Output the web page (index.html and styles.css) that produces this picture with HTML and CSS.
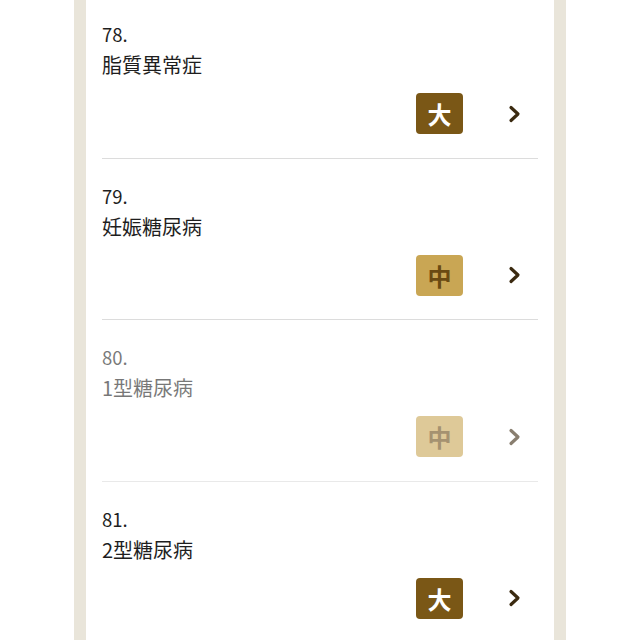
FILE: index.html
```html
<!DOCTYPE html>
<html>
<head>
<meta name="viewport" content="width=device-width, initial-scale=1">
<link rel="stylesheet" href="styles.css">
</head>
<body>

<div class="page">
    <ul class="disease-list">
        <li class="disease">
            <div class="num">78.</div>
            <div class="name">脂質異常症</div>
            <div class="disease-foot">
                <span class="level level-high">大</span>
                <span class="arrow"><svg width="14" height="18" viewBox="0 0 14 18"><path d="M3 2.5 L10 9 L3 15.5" fill="none" stroke="#3b2a10" stroke-width="3.2" stroke-linecap="round" stroke-linejoin="round"/></svg></span>
            </div>
        </li>
        <li class="disease">
            <div class="num">79.</div>
            <div class="name">妊娠糖尿病</div>
            <div class="disease-foot">
                <span class="level level-mid">中</span>
                <span class="arrow"><svg width="14" height="18" viewBox="0 0 14 18"><path d="M3 2.5 L10 9 L3 15.5" fill="none" stroke="#3b2a10" stroke-width="3.2" stroke-linecap="round" stroke-linejoin="round"/></svg></span>
            </div>
        </li>
        <li class="disease disabled">
            <div class="num">80.</div>
            <div class="name">1型糖尿病</div>
            <div class="disease-foot">
                <span class="level level-mid">中</span>
                <span class="arrow"><svg width="14" height="18" viewBox="0 0 14 18"><path d="M3 2.5 L10 9 L3 15.5" fill="none" stroke="#3b2a10" stroke-width="3.2" stroke-linecap="round" stroke-linejoin="round"/></svg></span>
            </div>
        </li>
        <li class="disease">
            <div class="num">81.</div>
            <div class="name">2型糖尿病</div>
            <div class="disease-foot">
                <span class="level level-high">大</span>
                <span class="arrow"><svg width="14" height="18" viewBox="0 0 14 18"><path d="M3 2.5 L10 9 L3 15.5" fill="none" stroke="#3b2a10" stroke-width="3.2" stroke-linecap="round" stroke-linejoin="round"/></svg></span>
            </div>
        </li>
    </ul>
</div>

</body>
</html>
```

FILE: styles.css
```css
* {
    box-sizing: border-box;
    margin: 0;
    padding: 0;
}

body {
    font-family: "Noto Sans CJK JP", "Noto Sans", sans-serif;
    background: #fff;
    color: #1e1e1e;
    height: 640px;
    overflow: hidden;
}

.page {
    width: 492px;
    margin: -3px 0 0 74px;
    border-left: 12px solid #e9e5da;
    border-right: 12px solid #e9e5da;
    background: #fff;
    padding: 0 16px;
    min-height: 700px;
}

.disease-list {
    list-style: none;
}

.disease {
    padding: 23px 0 23.5px;
    border-bottom: 1px solid #dcdcdc;
}

.num {
    font-size: 18.5px;
    line-height: 28px;
}

.name {
    font-size: 20px;
    line-height: 34px;
}

.disease-foot {
    display: flex;
    justify-content: flex-end;
    align-items: center;
    margin-top: 11px;
}

.level {
    width: 47px;
    height: 41px;
    border-radius: 4px;
    display: flex;
    align-items: center;
    justify-content: center;
    font-size: 24px;
    font-weight: bold;
}

.level-high {
    background: #7a5716;
    color: #fff;
}

.level-mid {
    background: #c9a654;
    color: #6a4a12;
}

.arrow {
    width: 46px;
    margin-left: 29px;
    display: flex;
    justify-content: center;
}

.disabled {
    opacity: 0.6;
}
```
